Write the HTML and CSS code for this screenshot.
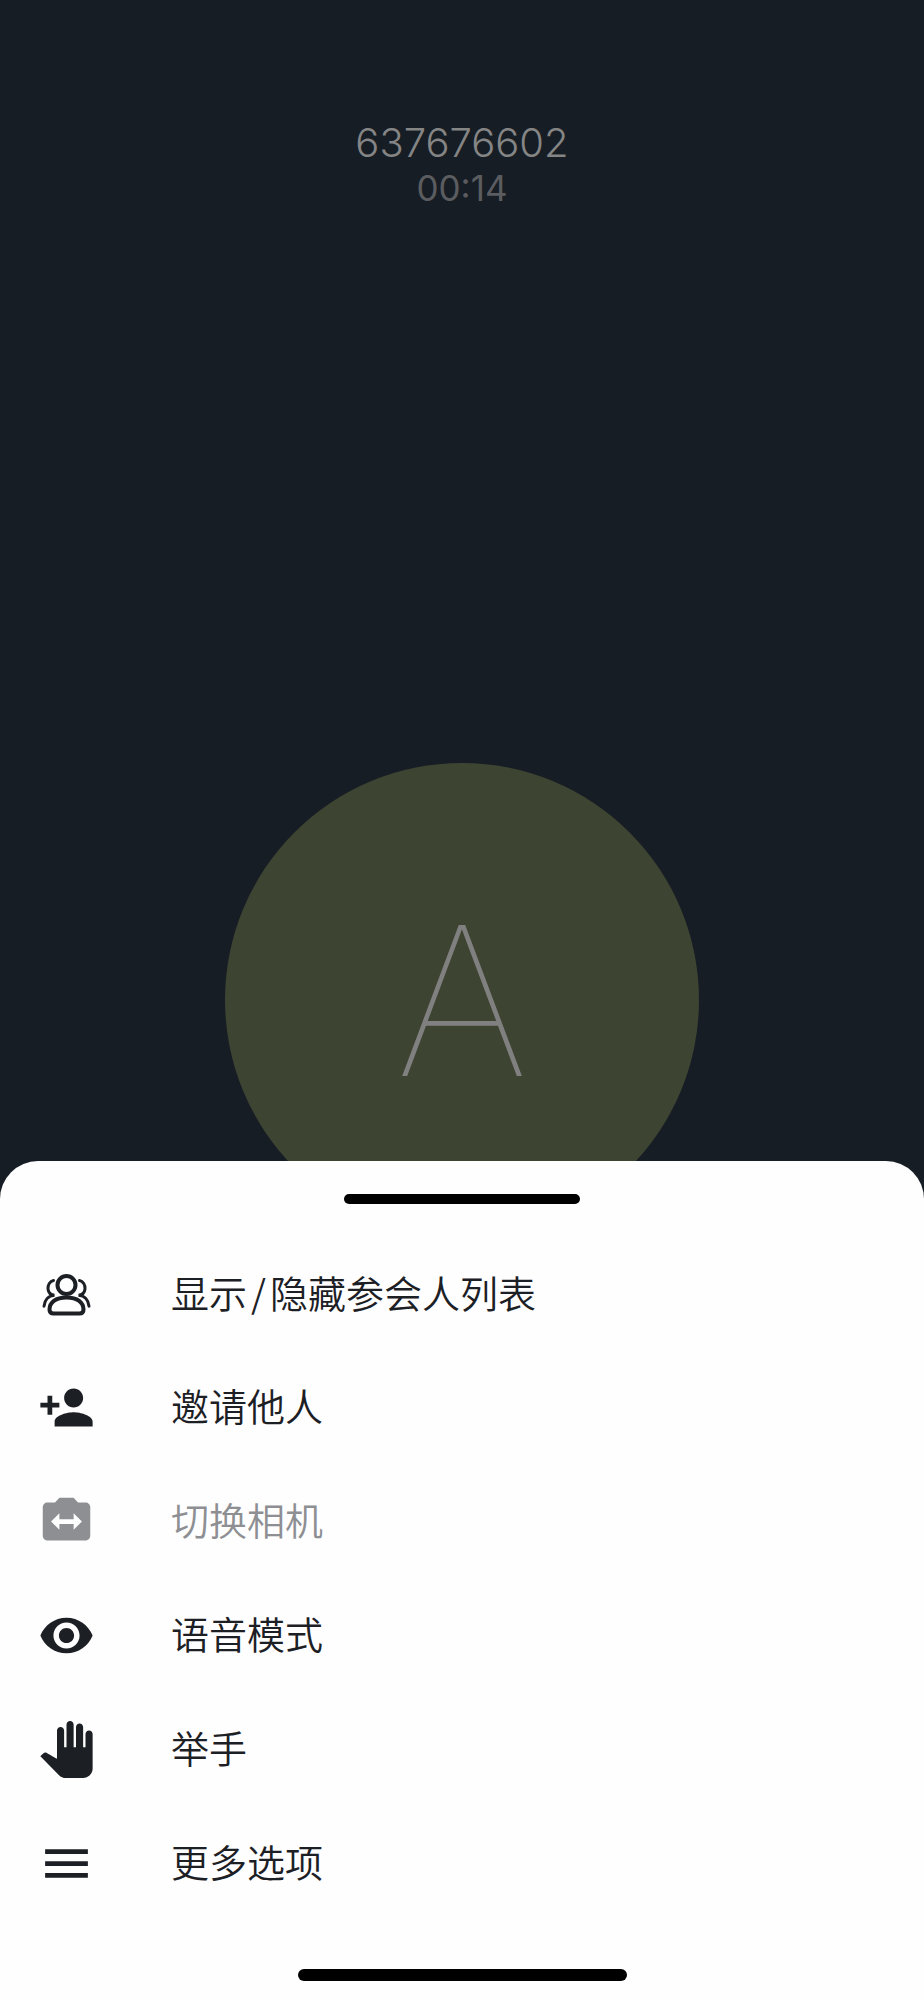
FILE: index.html
```html
<!DOCTYPE html>
<html lang="zh-CN">
<head>
<meta charset="utf-8">
<meta name="viewport" content="width=device-width, initial-scale=1">
<title>637676602</title>
<link rel="stylesheet" href="styles.css">
</head>
<body>
<div class="app">
  <main class="call">
    <header class="call-header">
      <h1 class="call-title">637676602</h1>
      <div class="call-time">00:14</div>
    </header>
    <div class="avatar">A</div>
  </main>
  <section class="sheet">
    <div class="handle"></div>
    <nav class="menu">
      <button class="item" type="button">
        <svg class="icon outline" viewBox="0 0 57 57" aria-hidden="true">
          <circle cx="28.5" cy="20" r="9"/>
          <path d="M15.500 48.500h26c2.500 0 4-1.500 4-4 0-7-6-12-17-12s-17 5-17 12c0 2.500 1.500 4 4 4z"/>
          <g class="thin">
            <path d="M15.500 15.500c-3.500.5-6 4.500-5.500 8.500.4 3.500 2.500 6 6.500 6.200-6 .5-10 5-10.500 11"/>
            <path d="M41.500 15.500c3.500.5 6 4.500 5.500 8.500-.4 3.500-2.500 6-6.500 6.200 6 .5 10 5 10.500 11"/>
          </g>
        </svg>
        <span>显示<span class="slash">/</span>隐藏参会人列表</span>
      </button>
      <button class="item" type="button">
        <svg class="icon" viewBox="0 0 24 24" aria-hidden="true"><path d="M15 12c2.210 0 4-1.790 4-4s-1.790-4-4-4-4 1.790-4 4 1.790 4 4 4zm-9-2V7H4v3H1v2h3v3h2v-3h3v-2H6zm9 4c-2.670 0-8 1.340-8 4v2h16v-2c0-2.660-5.330-4-8-4z"/></svg>
        <span>邀请他人</span>
      </button>
      <button class="item" type="button" disabled>
        <svg class="icon" viewBox="0 0 24 24" aria-hidden="true"><path d="M20 4h-3.170L15 2H9L7.170 4H4c-1.100 0-2 .9-2 2v12c0 1.100.9 2 2 2h16c1.100 0 2-.9 2-2V6c0-1.100-.9-2-2-2zm-5 11.500V13H9v2.500L5.500 12 9 8.500V11h6V8.500l3.500 3.500-3.500 3.500z"/></svg>
        <span>切换相机</span>
      </button>
      <button class="item" type="button">
        <svg class="icon" viewBox="0 0 24 24" aria-hidden="true"><path d="M12 4.500C7 4.500 2.730 7.610 1 12c1.730 4.390 6 7.500 11 7.500s9.270-3.110 11-7.500c-1.730-4.390-6-7.500-11-7.500zM12 17.500c-3.040 0-5.500-2.460-5.500-5.500s2.460-5.500 5.500-5.500 5.500 2.460 5.500 5.500-2.460 5.500-5.500 5.500zm0-8.700c-1.770 0-3.200 1.430-3.200 3.200s1.430 3.200 3.200 3.200 3.200-1.430 3.200-3.200-1.430-3.200-3.200-3.200z"/></svg>
        <span>语音模式</span>
      </button>
      <button class="item" type="button">
        <svg class="icon" viewBox="0 0 24 24" aria-hidden="true"><path d="M23 5.500V20c0 2.200-1.800 4-4 4h-7.300c-1.080 0-2.100-.43-2.850-1.190L1 14.830s1.260-1.230 1.300-1.250c.22-.19.49-.29.79-.29.22 0 .42.06.6.16.04.01 4.310 2.460 4.310 2.460V4c0-.83.67-1.500 1.500-1.500S11 3.170 11 4v7h1V1.500c0-.83.67-1.500 1.500-1.500S15 .67 15 1.500V11h1V2.500c0-.83.67-1.500 1.500-1.500s1.500.67 1.500 1.500V11h1V5.500c0-.83.67-1.500 1.500-1.500s1.500.67 1.500 1.500z"/></svg>
        <span>举手</span>
      </button>
      <button class="item" type="button">
        <svg class="icon" viewBox="0 0 24 24" aria-hidden="true"><path d="M3 18h18v-2H3v2zm0-5h18v-2H3v2zm0-7v2h18V6H3z"/></svg>
        <span>更多选项</span>
      </button>
    </nav>
    <div class="home-indicator"></div>
  </section>
</div>
</body>
</html>
```
FILE: styles.css
```css
* {
  box-sizing: border-box;
}

body {
  margin: 0;
  background: #171d24;
  font-family: Inter, "Noto Sans CJK SC", sans-serif;
}

.app {
  position: relative;
  min-height: 100vh;
  overflow: hidden;
}

.call {
  display: flex;
  flex-direction: column;
  align-items: center;
  padding-top: 119px;
}

.call-header {
  text-align: center;
}

.call-title {
  margin: 0;
  color: #858585;
  font-size: 40px;
  font-weight: 350;
  line-height: 48px;
}

.call-time {
  color: #5a5c60;
  font-size: 35px;
  font-weight: 400;
  line-height: 42px;
}

.avatar {
  display: flex;
  align-items: center;
  justify-content: center;
  width: 474px;
  height: 474px;
  margin-top: 554px;
  border-radius: 50%;
  background: #3e4432;
  color: #808080;
  font-size: 208px;
  font-weight: 120;
  line-height: 1;
}

.sheet {
  position: absolute;
  right: 0;
  bottom: 0;
  left: 0;
  display: flex;
  flex-direction: column;
  align-items: center;
  padding: 33px 0 19px;
  border-radius: 38px 38px 0 0;
  background: #fefefe;
}

.handle {
  width: 236px;
  height: 10px;
  border-radius: 5px;
  background: #000;
}

.menu {
  width: 100%;
  padding: 32px 0 49px;
}

.item {
  display: flex;
  align-items: center;
  gap: 76px;
  width: 100%;
  height: 114px;
  padding: 0 38px;
  border: 0;
  background: none;
  color: #1c2025;
  font-family: inherit;
  font-size: 38px;
  font-weight: 350;
  line-height: 56px;
  text-align: left;
}

.item:disabled {
  color: #8d8f92;
}

.slash {
  padding: 0 4px;
  font-family: "Noto Sans CJK SC", sans-serif;
}

.icon {
  flex: none;
  width: 57px;
  height: 57px;
  fill: currentColor;
}

.outline {
  fill: none;
  stroke: currentColor;
  stroke-width: 4;
  stroke-linecap: round;
}

.thin {
  stroke-width: 3;
}

.home-indicator {
  width: 329px;
  height: 12px;
  border-radius: 6px;
  background: #000;
}
```
